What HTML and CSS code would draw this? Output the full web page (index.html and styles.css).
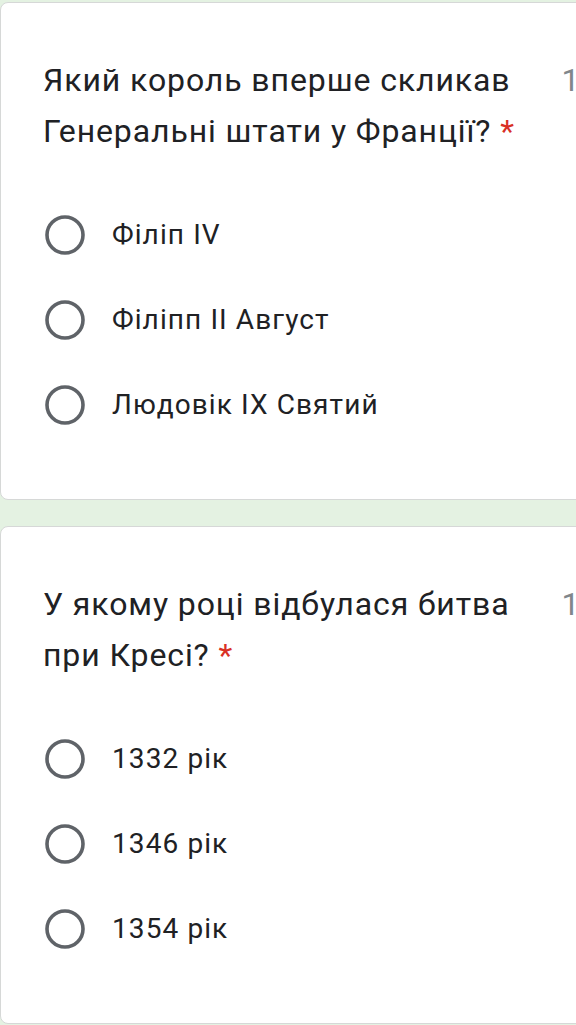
FILE: index.html
```html
<!DOCTYPE html>
<html lang="uk">
<head>
    <meta charset="UTF-8">
    <meta name="viewport" content="width=device-width, initial-scale=1.0">
    <title>Тест</title>
    <link rel="stylesheet" href="styles.css">
</head>
<body>

    <div class="card">
        <div class="question">
            <div class="question-title">Який король вперше скликав Генеральні штати у Франції? <span class="required">*</span></div>
            <div class="points">1 бал</div>
        </div>
        <div class="options">
            <label class="option">
                <svg class="radio" width="40" height="40" viewBox="0 0 40 40"><circle cx="20" cy="20" r="18" /></svg>
                <span>Філіп IV</span>
            </label>
            <label class="option">
                <svg class="radio" width="40" height="40" viewBox="0 0 40 40"><circle cx="20" cy="20" r="18" /></svg>
                <span>Філіпп II Август</span>
            </label>
            <label class="option">
                <svg class="radio" width="40" height="40" viewBox="0 0 40 40"><circle cx="20" cy="20" r="18" /></svg>
                <span>Людовік IX Святий</span>
            </label>
        </div>
    </div>

    <div class="card">
        <div class="question">
            <div class="question-title">У якому році відбулася битва при Кресі? <span class="required">*</span></div>
            <div class="points">1 бал</div>
        </div>
        <div class="options">
            <label class="option">
                <svg class="radio" width="40" height="40" viewBox="0 0 40 40"><circle cx="20" cy="20" r="18" /></svg>
                <span>1332 рік</span>
            </label>
            <label class="option">
                <svg class="radio" width="40" height="40" viewBox="0 0 40 40"><circle cx="20" cy="20" r="18" /></svg>
                <span>1346 рік</span>
            </label>
            <label class="option">
                <svg class="radio" width="40" height="40" viewBox="0 0 40 40"><circle cx="20" cy="20" r="18" /></svg>
                <span>1354 рік</span>
            </label>
        </div>
    </div>

</body>
</html>
```

FILE: styles.css
```css
body {
    margin: 0;
    padding: 2px 0 0 0;
    background-color: #e4f2e2; /* зелений фон форми */
    font-family: Roboto, Arial, sans-serif;
    color: #202124;
    overflow-x: hidden;
}

.card {
    background-color: white;
    border: 1px solid #d6d8d7;
    border-radius: 8px;
    width: 640px;
    margin-bottom: 26px;
    padding: 52px 0 52px 0;
}

.question {
    display: flex;
    padding-left: 42px;
}

.question-title {
    width: 490px;
    font-size: 32px;
    letter-spacing: 0.9px;
    line-height: 51px;
}

.required {
    color: #d93025;
}

.points {
    margin-left: 31px;
    font-size: 32px;
    line-height: 51px;
    color: #80868b;
    white-space: nowrap;
}

.options {
    display: flex;
    flex-direction: column;
    padding-top: 35px;
    padding-left: 44px;
}

.option {
    display: flex;
    align-items: center;
    gap: 27px;
    height: 85px;
    font-size: 28px;
    letter-spacing: 1.1px;
}

.radio circle {
    fill: none;
    stroke: #5f6368;
    stroke-width: 3.6;
}
```
